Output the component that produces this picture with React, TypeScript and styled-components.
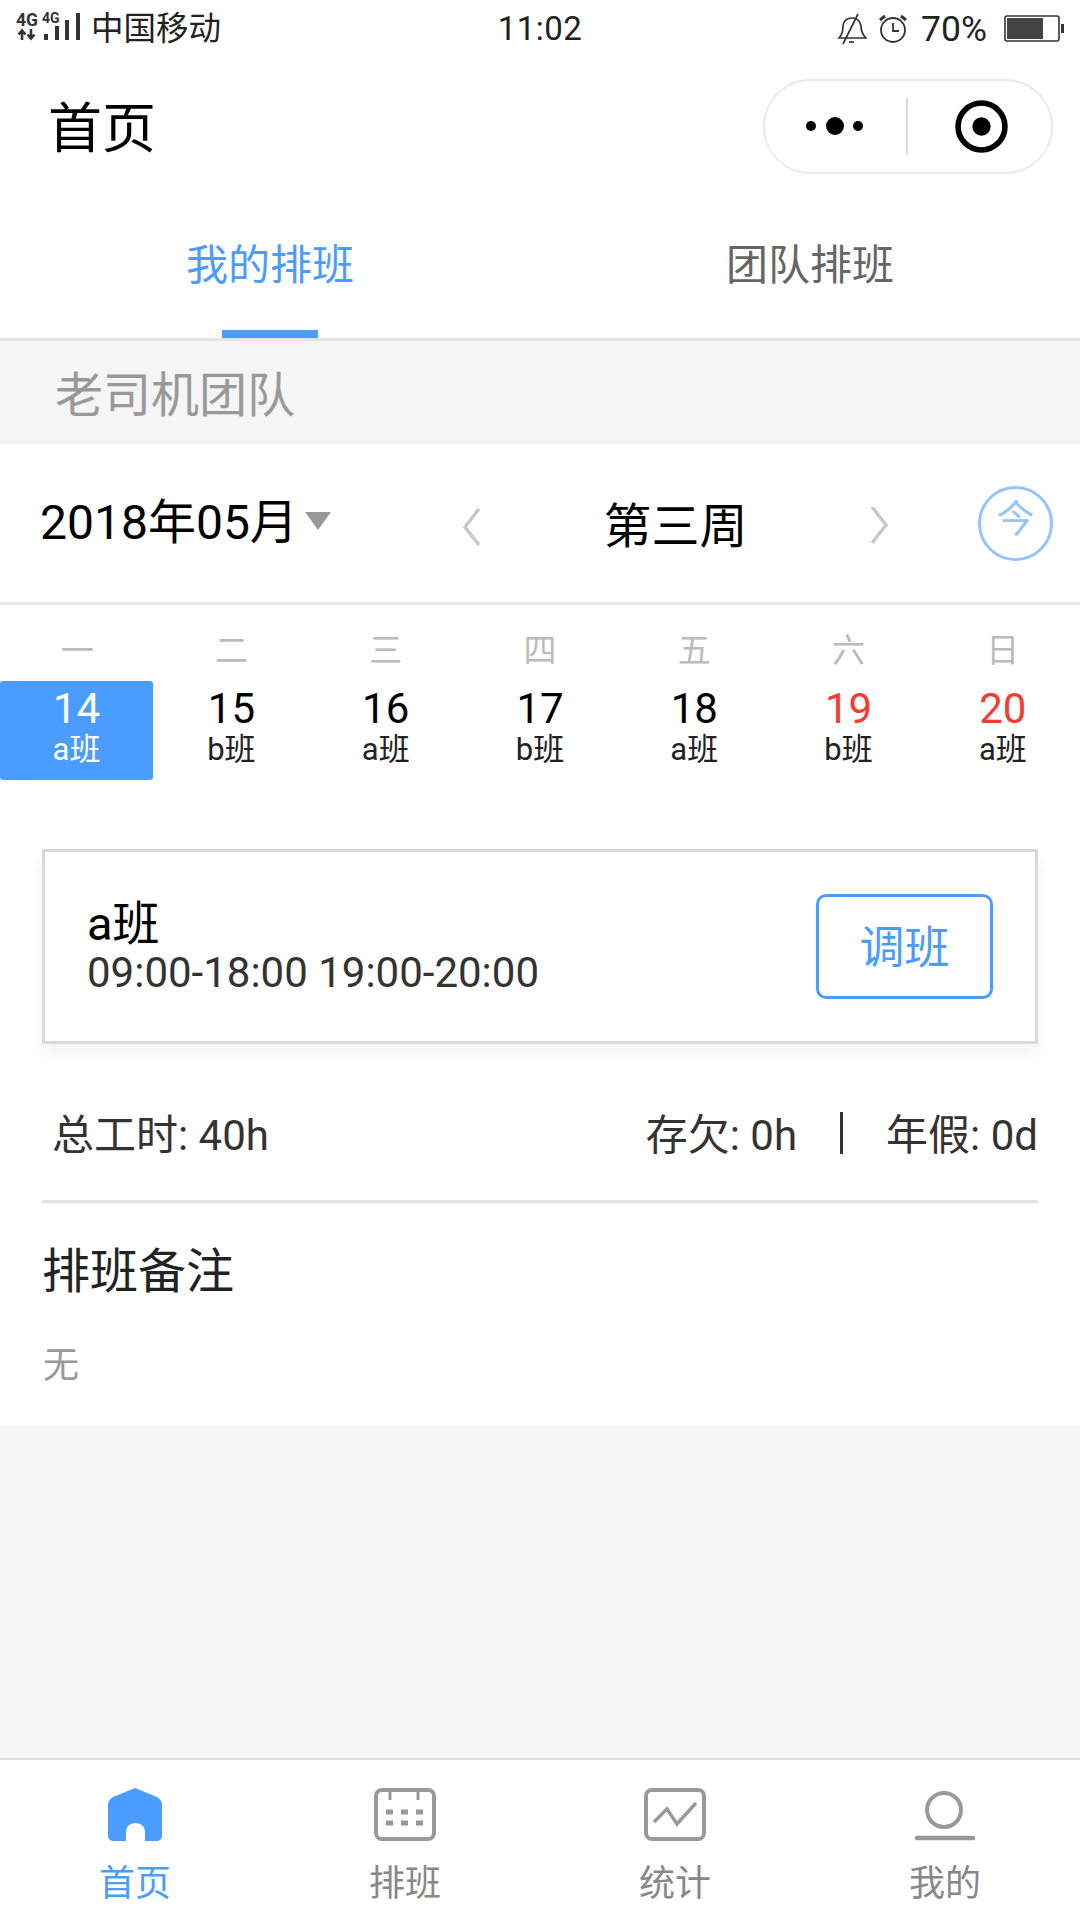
import React from 'react';
import styled, { createGlobalStyle } from 'styled-components';

const Global = createGlobalStyle`
  html, body { margin: 0; padding: 0; background: #fff; }
  * { box-sizing: border-box; }
  body { font-family: Roboto, "Noto Sans CJK SC", sans-serif; }
`;

const Page = styled.div`
  width: 1080px; height: 1920px; display: flex; flex-direction: column; background: #f5f5f5; overflow: hidden;
`;
const StatusBar = styled.div`
  height: 58px; background: #fff; display: grid; grid-template-columns: 1fr auto 1fr; align-items: center;
  padding: 0 16px 0 16px; color: #222;
`;
const StatusLeft = styled.div`display: flex; align-items: center; gap: 9px; font-size: 32.5px; line-height: 54px;`;
const StatusRight = styled.div`display: flex; align-items: center; justify-content: flex-end; gap: 14px; font-size: 35.5px; line-height: 54px;`;
const BellSlot = styled.span`display: flex; margin-right: -2px;`;
const BatteryLevel = styled.span`margin-right: 3px;`;
const Clock = styled.div`font-size: 33px; letter-spacing: 0.5px; line-height: 58px;`;
const NavBar = styled.div`
  height: 132px; background: #fff; display: flex; align-items: center; justify-content: space-between;
  padding: 4px 27px 0 48px;
`;
const Title = styled.h1`margin: 8px 0 0; font-size: 54px; font-weight: 400; color: #000; line-height: 60px;`;
const Capsule = styled.div`
  width: 290px; height: 95px; border: 2px solid #ebebeb; border-radius: 48px; display: flex; align-items: center;
`;
const CapsuleCell = styled.div<{ $nudge: number }>`
  flex: 1; display: flex; align-items: center; justify-content: center;
  padding: ${p => (p.$nudge > 0 ? `0 0 0 ${p.$nudge}px` : `0 ${-p.$nudge}px 0 0`)};
`;
const CapsuleRule = styled.div`width: 2px; height: 57px; background: #ddd;`;
const Tabs = styled.div`
  height: 151px; background: #fff; display: flex; border-bottom: 3px solid #e4e4e4;
`;
const Tab = styled.div<{ $on?: boolean }>`
  position: relative; flex: 1; display: flex; justify-content: center; padding-top: 50px;
  font-size: 42px; line-height: 52px; color: ${p => (p.$on ? '#4a9dff' : '#666')};
  ${p => p.$on && `&::after { content: ''; position: absolute; left: 222px; bottom: 0; width: 96px; height: 8px; background: #4a9dff; }`}
`;
const Team = styled.div`
  height: 103px; background: #f5f5f5; padding: 0 0 4px 55px; display: flex; align-items: center;
  font-size: 48px; color: #999;
`;
const Main = styled.div`background: #fff; display: flex; flex-direction: column;`;
const DateRow = styled.div`
  height: 161px; border-bottom: 3px solid #e4e4e4; display: flex; align-items: center;
  padding: 0 27px 0 40px;
`;
const Month = styled.div`
  width: 263px; font-size: 48px; color: #000; line-height: 56px; white-space: nowrap;
`;
const Caret = styled.div`
  width: 0; height: 0; border-left: 13px solid transparent; border-right: 13px solid transparent;
  border-top: 18px solid #999; margin: -4px 0 0 2px;
`;
const Week = styled.div`
  display: flex; align-items: center; margin: 8px 0 0 130px; width: 429px; justify-content: space-between;
`;
const WeekLabel = styled.div`font-size: 48px; color: #000; line-height: 56px;`;
const Today = styled.div`
  margin-left: auto; width: 75px; height: 75px; border-radius: 50%; border: 3px solid #93c5ff; color: #93c5ff;
  font-size: 38px; line-height: 60px; display: flex; justify-content: center;
`;
const Days = styled.div`display: grid; grid-template-columns: repeat(7, 1fr); padding-top: 22px;`;
const Day = styled.div`display: flex; flex-direction: column; align-items: center;`;
const Weekday = styled.div`font-size: 33px; color: #bbb; line-height: 48px; height: 54px;`;
const DateCell = styled.div<{ $on?: boolean }>`
  width: 153px; height: 99px; border-radius: 3px; display: flex; flex-direction: column; align-items: center;
  ${p => p.$on && 'align-self: flex-start; background: #4a9dff;'}
`;
const DateNum = styled.div<{ $on?: boolean; $red?: boolean }>`
  font-size: 42px; line-height: 48px; margin-top: 4px;
  color: ${p => (p.$on ? '#fff' : p.$red ? '#f23c32' : '#000')};
`;
const Shift = styled.div<{ $on?: boolean }>`
  font-size: 31px; line-height: 33px; color: ${p => (p.$on ? '#fff' : '#222')};
`;
const Card = styled.div`
  margin: 69px 42px 0; height: 195px; border: 3px solid #d9d9d9; background: #fff;
  box-shadow: 0 10px 20px rgba(0,0,0,.05); display: flex; align-items: center; justify-content: space-between;
  padding: 0 42px 0 42px;
`;
const CardName = styled.div`font-size: 47px; line-height: 52px; color: #000;`;
const CardTime = styled.div`font-size: 42px; line-height: 46px; color: #333;`;
const SwapButton = styled.div`
  width: 177px; height: 105px; border: 3px solid #4a9dff; border-radius: 10px; color: #4a9dff;
  font-size: 45px; line-height: 104px; display: flex; justify-content: center;
`;
const Totals = styled.div`
  margin: 0 42px; height: 159px; padding: 18px 0 0 10px; border-bottom: 3px solid #e4e4e4; display: flex;
  align-items: center; justify-content: space-between; font-size: 42px; color: #333;
`;
const TotalsRight = styled.div`display: flex; align-items: center;`;
const Rule = styled.div`width: 3px; height: 42px; background: #333; margin: 3px 43px 0;`;
const NoteTitle = styled.div`margin-left: 42px; padding-top: 41px; font-size: 48px; line-height: 56px; color: #222; height: 98px;`;
const NoteText = styled.div`margin-left: 43px; padding-top: 42px; font-size: 36px; line-height: 46px; color: #999; height: 125px;`;
const Spacer = styled.div`flex: 1; background: #f5f5f5;`;
const TabBar = styled.div`
  height: 162px; background: #fff; border-top: 2px solid #ddd; display: grid; grid-template-columns: repeat(4, 1fr);
`;
const TabItem = styled.div<{ $on?: boolean }>`
  display: flex; flex-direction: column; align-items: center; padding-top: 28px;
  font-size: 36px; line-height: 44px; color: ${p => (p.$on ? '#4a9dff' : '#888')};
`;
const TabIcon = styled.svg`width: 64px; height: 56px; margin-bottom: 18px; display: block;`;

const days = [
  ['一', '14', 'a班'], ['二', '15', 'b班'], ['三', '16', 'a班'], ['四', '17', 'b班'],
  ['五', '18', 'a班'], ['六', '19', 'b班'], ['日', '20', 'a班'],
];

const Signal = () => (
  <svg width="66" height="36" viewBox="0 0 66 36">
    <text x="0" y="15" fontSize="17.5" fontWeight="700" fill="#333" fontFamily="Roboto">4G</text>
    <text x="26" y="12" fontSize="14" fontWeight="700" fill="#333" fontFamily="Roboto">4G</text>
    <path d="M6 29V20M2.5 23.5L6 19.5l3.5 4M15 18v9M11.5 23.5l3.5 4 3.5-4" stroke="#333" strokeWidth="2.6" fill="none" />
    <rect x="28" y="23" width="4" height="6" fill="#333" />
    <rect x="39" y="15" width="4" height="14" fill="#333" />
    <rect x="49" y="9" width="4" height="20" fill="#333" />
    <rect x="60" y="2" width="4" height="27" fill="#333" />
  </svg>
);

const Bell = () => (
  <svg width="30" height="32" viewBox="0 0 30 32" fill="none" stroke="#333" strokeWidth="1.7">
    <path d="M2 25c3-3 4-6 4-12 0-5 4-8 9-8s8 3 9 8c0 6 2 9 5 12z" />
    <path d="M21 1L6 31" />
    <path d="M12 29h5" />
  </svg>
);

const Alarm = () => (
  <svg width="28" height="30" viewBox="0 0 28 30" fill="none" stroke="#333" strokeWidth="1.8">
    <circle cx="14" cy="16" r="12" />
    <path d="M14 9v8h6" />
    <path d="M1 6l5-4M27 6l-5-4" strokeWidth="3" />
  </svg>
);

const Battery = () => (
  <svg width="60" height="28" viewBox="0 0 60 28">
    <rect x="1" y="1" width="54" height="25" rx="2" fill="none" stroke="#333" strokeWidth="1.6" />
    <rect x="3" y="3" width="36" height="21" fill="#444" />
    <rect x="57" y="9" width="3" height="9" fill="#333" />
  </svg>
);

const Dots = () => (
  <svg width="58" height="20" viewBox="0 0 58 20">
    <circle cx="5" cy="10" r="5" fill="#000" />
    <circle cx="29" cy="10" r="9" fill="#000" />
    <circle cx="52" cy="10" r="5" fill="#000" />
  </svg>
);

const Target = () => (
  <svg width="53" height="53" viewBox="0 0 52 52">
    <circle cx="26" cy="26" r="23" fill="none" stroke="#000" strokeWidth="5.5" />
    <circle cx="26" cy="26" r="9" fill="#000" />
  </svg>
);

const Chevron = ({ d }: { d: string }) => (
  <svg width="22" height="40" viewBox="0 0 22 40"><path d={d} fill="none" stroke="#c8c8c8" strokeWidth="3.5" /></svg>
);

export default function App() {
  return (
    <Page>
      <Global />
      <StatusBar>
        <StatusLeft><Signal /><span>中国移动</span></StatusLeft>
        <Clock>11:02</Clock>
        <StatusRight><BellSlot><Bell /></BellSlot><Alarm /><BatteryLevel>70%</BatteryLevel><Battery /></StatusRight>
      </StatusBar>
      <NavBar>
        <Title>首页</Title>
        <Capsule>
          <CapsuleCell $nudge={-1}><Dots /></CapsuleCell>
          <CapsuleRule />
          <CapsuleCell $nudge={4}><Target /></CapsuleCell>
        </Capsule>
      </NavBar>
      <Tabs>
        <Tab $on>我的排班</Tab>
        <Tab>团队排班</Tab>
      </Tabs>
      <Team>老司机团队</Team>
      <Main>
        <DateRow>
          <Month>2018年05月</Month>
          <Caret />
          <Week>
            <Chevron d="M18 2L4 20l14 18" />
            <WeekLabel>第三周</WeekLabel>
            <Chevron d="M4 0l14 18L4 36" />
          </Week>
          <Today>今</Today>
        </DateRow>
        <Days>
          {days.map(([w, n, s], i) => (
            <Day key={n}>
              <Weekday>{w}</Weekday>
              <DateCell $on={i === 0}>
                <DateNum $on={i === 0} $red={i > 4}>{n}</DateNum>
                <Shift $on={i === 0}>{s}</Shift>
              </DateCell>
            </Day>
          ))}
        </Days>
        <Card>
          <div>
            <CardName>a班</CardName>
            <CardTime>09:00-18:00 19:00-20:00</CardTime>
          </div>
          <SwapButton>调班</SwapButton>
        </Card>
        <Totals>
          <span>总工时: 40h</span>
          <TotalsRight>
            <span>存欠: 0h</span>
            <Rule />
            <span>年假: 0d</span>
          </TotalsRight>
        </Totals>
        <NoteTitle>排班备注</NoteTitle>
        <NoteText>无</NoteText>
      </Main>
      <Spacer />
      <TabBar>
        <TabItem $on>
          <TabIcon viewBox="0 0 64 56">
            <path d="M32 0L54 9Q59 12 59 17V47Q59 53 53 53H42V45Q42 35 32.5 35Q23 35 23 45V53H11Q5 53 5 47V17Q5 12 10 9Z" fill="#4a9dff" />
          </TabIcon>
          首页
        </TabItem>
        <TabItem>
          <TabIcon viewBox="0 0 64 56" fill="none" stroke="#999" strokeWidth="4">
            <rect x="3" y="2" width="58" height="49" rx="6" />
            <path d="M17 3v9M45 3v9" strokeWidth="3" />
            <path d="M13 24h7M28 24h7M43 24h7M13 35h7M28 35h7M43 35h7" strokeWidth="5" />
          </TabIcon>
          排班
        </TabItem>
        <TabItem>
          <TabIcon viewBox="0 0 64 56" fill="none" stroke="#999" strokeWidth="4">
            <rect x="3" y="2" width="58" height="49" rx="6" />
            <path d="M11 34l13-13 10 15 19-21" strokeWidth="3.5" />
          </TabIcon>
          统计
        </TabItem>
        <TabItem>
          <TabIcon viewBox="0 0 64 56" fill="none" stroke="#999" strokeWidth="4">
            <ellipse cx="31" cy="22" rx="17" ry="17" />
            <path d="M4 50h56" strokeWidth="4.5" strokeLinecap="round" />
          </TabIcon>
          我的
        </TabItem>
      </TabBar>
    </Page>
  );
}
